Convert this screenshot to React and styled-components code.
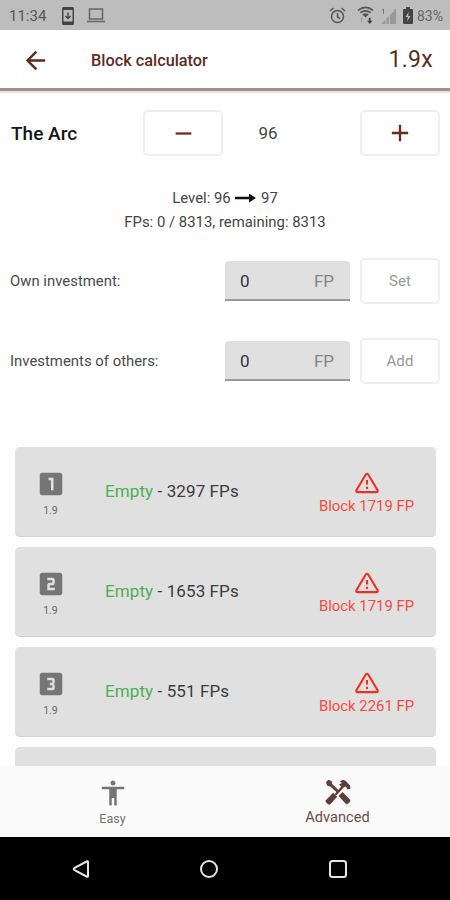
import styled, { createGlobalStyle } from "styled-components"
import { MdLooksOne, MdLooksTwo, MdLooks3, MdAccessibility, MdAdd, MdRemove, MdArrowBack } from "react-icons/md"

const rewards = [
    { place: 1, Icon: MdLooksOne, fps: 3297, block: 1719 },
    { place: 2, Icon: MdLooksTwo, fps: 1653, block: 1719 },
    { place: 3, Icon: MdLooks3, fps: 551, block: 2261 },
]

export default function App() {
    return (
        <Screen>
            <GlobalStyle />
            <StatusBar />
            <Header>
                <MdArrowBack size={29} />
                <h1>Block calculator</h1>
                <Factor>1.9x</Factor>
            </Header>
            <Content>
                <LevelRow>
                    <h2>The Arc</h2>
                    <OutlineButton><MdRemove size={27} /></OutlineButton>
                    <span>96</span>
                    <OutlineButton><MdAdd size={28} /></OutlineButton>
                </LevelRow>
                <Summary>
                    <p>Level: 96 <LongArrow /> 97</p>
                    <p>FPs: 0 / 8313, remaining: 8313</p>
                </Summary>
                <Investment label="Own investment:" action="Set" />
                <Investment label="Investments of others:" action="Add" />
                <RewardList>
                    {rewards.map(el => <Reward key={el.place} {...el} />)}
                    <RewardCard />
                </RewardList>
            </Content>
            <Tabs>
                <Tab $size="12.5px">
                    <MdAccessibility size={30} />
                    <span>Easy</span>
                </Tab>
                <Tab $active $size="14.6px">
                    <HammerScrewdriver />
                    <span>Advanced</span>
                </Tab>
            </Tabs>
            <SystemNav />
        </Screen>
    )
}

function StatusBar() {
    return (
        <StatusContainer>
            <StatusGroup $gap="13px">
                <span>11:34</span>
                <svg width="12" height="18" viewBox="0 0 12 18">
                    <path fill="#444" fillRule="evenodd" d="M1.5 0h9A1.5 1.5 0 0 1 12 1.5v15a1.5 1.5 0 0 1-1.5 1.5h-9A1.5 1.5 0 0 1 0 16.5v-15A1.5 1.5 0 0 1 1.5 0zM1.5 3v11.5h9V3z" />
                    <path d="M6 5.5v6M3.500 9L6 11.500 8.500 9" fill="none" stroke="#444" strokeWidth="1.4" />
                </svg>
                <svg width="18" height="15" viewBox="0 0 18 15">
                    <path d="M2.500 1h13v10h-13zM0 13.500h18" fill="none" stroke="#666" strokeWidth="1.5" />
                </svg>
            </StatusGroup>
            <StatusGroup $gap="7px">
                <svg width="17" height="17" viewBox="0 0 17 17" fill="none" stroke="#555" strokeWidth="1.5">
                    <circle cx="8.5" cy="9.5" r="6" />
                    <path d="M8.500 6v4l2.500 1.500M1 4l3.500-3M16 4l-3.500-3" />
                </svg>
                <WifiIcon width="17" height="19" viewBox="0 0 18 19" fill="none" stroke="#555" strokeWidth="1.8">
                    <path d="M1 4Q9-2 17 4M3.500 6.500q5.500-4 11 0M6 9q3-2 6 0" />
                    <path d="M9 12L6.500 8.500h5z" fill="#555" stroke="none" />
                    <path d="M5 12v5M3.500 13.500L5 12l1.500 1.500" stroke="#999" strokeWidth="1" />
                    <path d="M12.500 12v3h-2l3 3.500 3-3.500h-2v-3z" fill="#444" stroke="none" />
                </WifiIcon>
                <svg width="15" height="18" viewBox="0 0 15 18">
                    <path d="M0 17L13 4v13z" fill="#999" />
                    <path d="M14 2v15M1 3l1.500-1v5" fill="none" stroke="#777" />
                    <path d="M5 12v5M8.500 9v8" stroke="#bdbdbd" />
                </svg>
                <svg width="10" height="17" viewBox="0 0 10 17">
                    <path d="M3 0h4v2h2q1 0 1 1v13q0 1-1 1H1q-1 0-1-1V3q0-1 1-1h2z" fill="#444" />
                    <path d="M6 4.500L2.500 10H5l-1 4.500L7.500 9H5z" fill="#bdbdbd" />
                </svg>
                <Percent>83%</Percent>
            </StatusGroup>
        </StatusContainer>
    )
}

function Investment({ label, action }) {
    return (
        <InvestmentRow>
            <span>{label}</span>
            <Field>
                <span>0</span>
                <em>FP</em>
            </Field>
            <OutlineButton $disabled>{action}</OutlineButton>
        </InvestmentRow>
    )
}

function Reward({ Icon, fps, block }) {
    return (
        <RewardCard>
            <Place>
                <Icon size={30} />
                <small>1.9</small>
            </Place>
            <RewardText><b>Empty</b> - {fps} FPs</RewardText>
            <Block>
                <WarningIcon />
                <span>Block {block} FP</span>
            </Block>
        </RewardCard>
    )
}

function LongArrow() {
    return (
        <ArrowSvg width="21" height="10" viewBox="0 0 21 10">
            <path d="M0 3.800h14V.500L21 5l-7 4.500V6.200H0z" fill="#111" />
        </ArrowSvg>
    )
}

function WarningIcon() {
    return (
        <svg width="24" height="22" viewBox="0 0 25 22" fill="none" stroke="#f03022" strokeWidth="2.2">
            <path d="M11.200 2.200L1.500 18.500Q.700 20.500 2.800 20.500h19.400Q24.300 20.500 23.500 18.500L13.800 2.200Q12.500.500 11.200 2.200z" />
            <path d="M12.500 8v4.500M12.500 15v2.200" />
        </svg>
    )
}

function HammerScrewdriver() {
    return (
        <svg width="26" height="26" viewBox="0 0 26 26" fill="#5d4037">
            <path d="M1 3L3.500.700 6.500 2 7.500 5.200 14.500 12 12.500 14 5.200 7.500 2 6.500z" />
            <path d="M13.500 17l4-4 7.500 7.500q.9 1.200 0 2.200l-2 2q-1.100.9-2.200 0z" />
            <path d="M8.200 13.800l4 4-7 7.400q-1.100.9-2.200 0l-2-2q-1-1.100 0-2.200z" />
            <path d="M9.500 15.200l6.700-7.700-2.200-2L17 4l-2-1.600Q18-.200 21 2.200L25 6.400l.5 3.300-2.800.8-2-3-2 1-7.200 7.800z" />
        </svg>
    )
}

function SystemNav() {
    return (
        <SystemContainer>
            <svg width="18" height="20" viewBox="0 0 18 20"><path d="M16 2.500v15Q16 18 15 17.700L2.200 10.800q-1-.8 0-1.600L15 2.300q1-.3 1 .2z" /></svg>
            <svg width="20" height="20" viewBox="0 0 20 20"><circle cx="10" cy="10" r="8" /></svg>
            <svg width="20" height="20" viewBox="0 0 20 20"><rect x="2" y="2" width="16" height="16" rx="2.5" /></svg>
        </SystemContainer>
    )
}

const GlobalStyle = createGlobalStyle`
    * {
        box-sizing: border-box;
        margin: 0;
        padding: 0;
    }

    body {
        font-family: Roboto, "Liberation Sans", sans-serif;
        background-color: #ffffff;
    }

    svg {
        display: block;
        flex-shrink: 0;
    }
`

const Screen = styled.div`
    width: 450px;
    height: 900px;
    display: flex;
    flex-direction: column;
    overflow: hidden;
    background-color: #fefefe;
`

const StatusContainer = styled.div`
    height: 30px;
    flex-shrink: 0;
    display: flex;
    justify-content: space-between;
    align-items: center;
    padding: 1px 7px 0 9px;
    background-color: #bdbdbd;
    color: #555555;
`

const StatusGroup = styled.div`
    display: flex;
    align-items: center;
    gap: ${props => props.$gap};

    > span:first-child {
        width: 40px;
        font-size: 15px;
    }
`

const WifiIcon = styled.svg`
    margin-left: 4px;
`

const Percent = styled.span`
    font-size: 14px;
    margin-left: -3px;
    color: #666666;
`

const Header = styled.header`
    height: 63px;
    flex-shrink: 0;
    display: flex;
    align-items: center;
    padding: 0 17px 0 21px;
    background-color: #ffffff;
    border-bottom: 2px solid #f1dfdd;
    box-shadow: inset 0 -3px #a18d8b;
    color: #5f2b1c;

    h1 {
        flex: 1;
        margin-left: 41px;
        font-size: 16.3px;
        font-weight: 500;
    }
`

const Factor = styled.span`
    padding-bottom: 2px;
    font-size: 23px;
    letter-spacing: 0.3px;
`

const Content = styled.main`
    flex: 1;
    min-height: 0;
    overflow: hidden;
    padding-top: 17px;
`

const LevelRow = styled.div`
    height: 46px;
    display: grid;
    grid-template-columns: 132px 80px 90px 1fr;
    align-items: center;
    padding: 0 10px 0 11px;
    color: #444444;
    font-size: 17px;

    h2 {
        color: #151515;
        font-size: 19px;
        font-weight: 500;
    }

    > span {
        text-align: center;
    }

    > :last-child {
        justify-self: end;
    }
`

const OutlineButton = styled.button`
    width: 80px;
    height: 46px;
    display: flex;
    justify-content: center;
    align-items: center;
    border: 2px solid #eeeeee;
    border-radius: 5px;
    background-color: #ffffff;
    color: ${props => props.$disabled ? "#999999" : "#6b2b1b"};
    font-family: inherit;
    font-size: 15px;
    letter-spacing: 0.1px;
`

const Summary = styled.div`
    display: flex;
    flex-direction: column;
    align-items: center;
    margin: 30px 0 24px;
    color: #444444;
    font-size: 14.9px;
    line-height: 24px;
`

const ArrowSvg = styled.svg`
    display: inline-block;
    margin: 0 1px;
`

const InvestmentRow = styled.div`
    height: 46px;
    display: grid;
    grid-template-columns: 1fr 125px 80px;
    column-gap: 10px;
    align-items: center;
    margin-bottom: 34px;
    padding: 0 10px;
    color: #4a4a4a;
    font-size: 14.9px;
`

const Field = styled.div`
    height: 40px;
    display: flex;
    justify-content: space-between;
    align-items: center;
    padding: 1px 16px 0 15px;
    border-bottom: 2px solid #999999;
    border-radius: 4px 4px 0 0;
    background-color: #e0e0e0;
    color: #333333;
    font-size: 17px;

    em {
        color: #858585;
        font-style: normal;
    }
`

const RewardList = styled.div`
    display: flex;
    flex-direction: column;
    gap: 10px;
    padding: 29px 14px 0 15px;
`

const RewardCard = styled.div`
    height: 90px;
    flex-shrink: 0;
    display: grid;
    grid-template-columns: 70px 1fr 137px;
    align-items: center;
    border-bottom: 1px solid #cfcfcf;
    border-radius: 5px;
    background-color: #e0e0e0;
`

const Place = styled.div`
    display: flex;
    flex-direction: column;
    align-items: center;
    padding: 2px 0 0 1px;
    color: #757575;

    small {
        margin-top: 5px;
        font-size: 10.5px;
        color: #666666;
    }
`

const RewardText = styled.p`
    padding: 0 0 2px 20px;
    color: #3c3c3c;
    font-size: 17px;
    letter-spacing: 0.1px;

    b {
        color: #4caf50;
        font-weight: 400;
    }
`

const Block = styled.div`
    display: flex;
    flex-direction: column;
    align-items: center;
    gap: 3px;
    padding: 3px 2px 0 0;
    color: #f44c40;
    font-size: 14.9px;
`

const Tabs = styled.nav`
    height: 71px;
    flex-shrink: 0;
    display: grid;
    grid-template-columns: 1fr 1fr;
    background-color: #fafafa;
`

const Tab = styled.div`
    display: flex;
    flex-direction: column;
    align-items: center;
    justify-content: center;
    gap: 3px;
    padding-top: ${props => props.$active ? "2px" : "0"};
    color: ${props => props.$active ? "#6d4c46" : "#757575"};
    font-size: ${props => props.$size};
`

const SystemContainer = styled.div`
    height: 63px;
    flex-shrink: 0;
    display: flex;
    justify-content: space-between;
    align-items: center;
    padding: 0 102px 0 72px;
    background-color: #000000;

    svg {
        fill: none;
        stroke: #e5e5e5;
        stroke-width: 2;
    }
`
